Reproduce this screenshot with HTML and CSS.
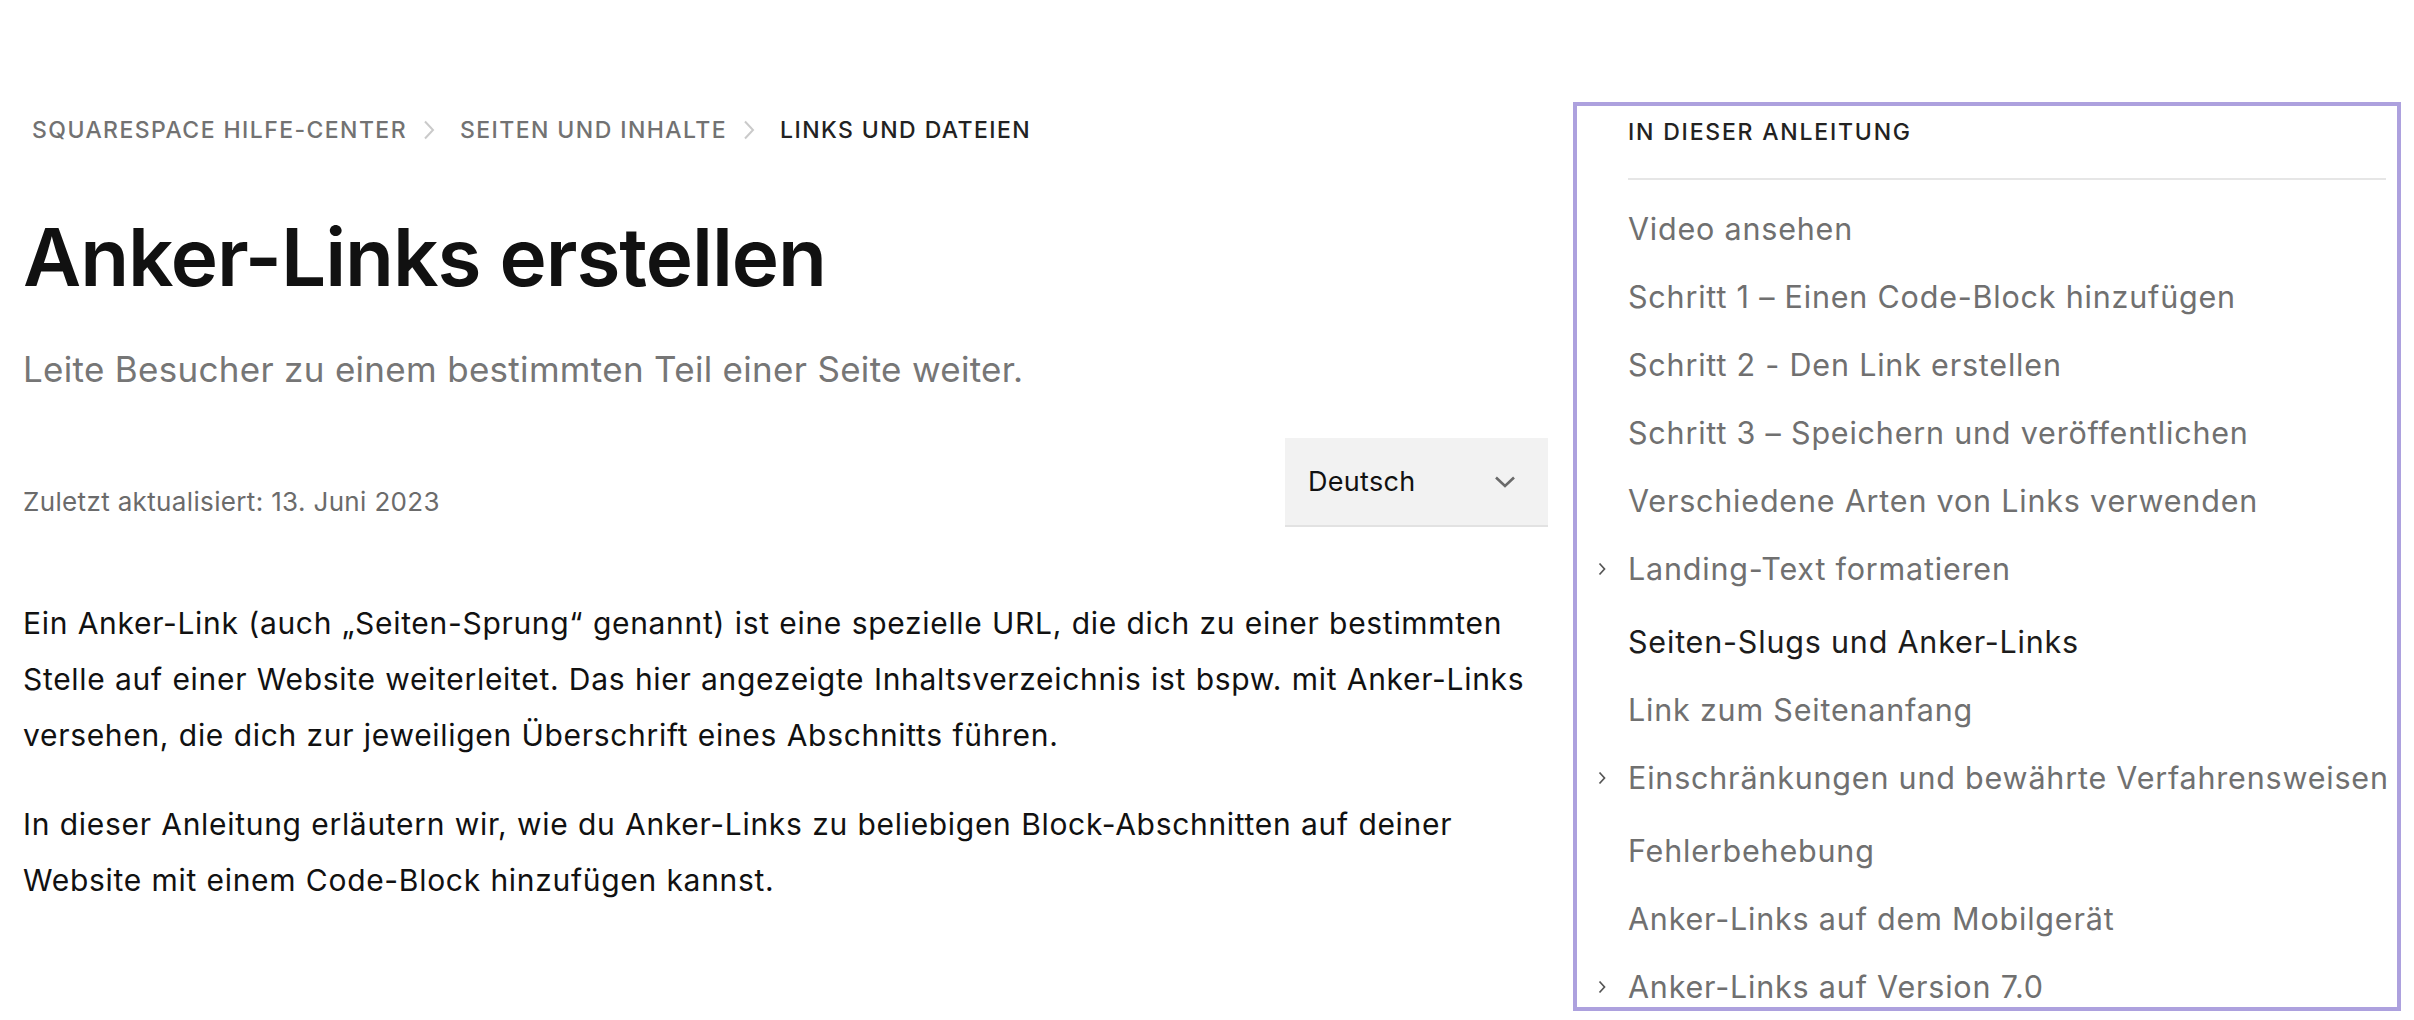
FILE: index.html
```html
<!DOCTYPE html>
<html lang="de">
<head>
<meta charset="utf-8">
<title>Anker-Links erstellen</title>
<link rel="stylesheet" href="styles.css">
</head>
<body>
<div class="page">
  <main class="main">
    <nav class="crumbs">
      <a class="crumb">Squarespace Hilfe-Center</a>
      <svg class="crumb-sep" viewBox="0 0 14 20" width="14" height="20"><path d="M3 1.5 L11 10 L3 18.5" fill="none" stroke="#cacaca" stroke-width="2"/></svg>
      <a class="crumb">Seiten und Inhalte</a>
      <svg class="crumb-sep" viewBox="0 0 14 20" width="14" height="20"><path d="M3 1.5 L11 10 L3 18.5" fill="none" stroke="#cacaca" stroke-width="2"/></svg>
      <a class="crumb crumb-current">Links und Dateien</a>
    </nav>
    <h1 class="title">Anker-Links erstellen</h1>
    <p class="subtitle">Leite Besucher zu einem bestimmten Teil einer Seite weiter.</p>
    <div class="meta">
      <span class="updated">Zuletzt aktualisiert: 13. Juni 2023</span>
      <div class="lang">
        <span class="lang-label">Deutsch</span>
        <svg class="lang-caret" viewBox="0 0 22 14" width="22" height="14"><path d="M2 2.5 L11 11 L20 2.5" fill="none" stroke="#6a6a6a" stroke-width="2.6"/></svg>
      </div>
    </div>
    <div class="body">
      <p>Ein Anker-Link (auch „Seiten-Sprung“ genannt) ist eine spezielle URL, die dich zu einer bestimmten Stelle auf einer Website weiterleitet. Das hier angezeigte Inhaltsverzeichnis ist bspw. mit Anker-Links versehen, die dich zur jeweiligen Überschrift eines Abschnitts führen.</p>
      <p>In dieser Anleitung erläutern wir, wie du Anker-Links zu beliebigen Block-Abschnitten auf deiner Website mit einem Code-Block hinzufügen kannst.</p>
    </div>
  </main>
  <aside class="toc">
    <div class="toc-heading">In dieser Anleitung</div>
    <div class="toc-rule"></div>
    <ul class="toc-list">
      <li class="toc-item">Video ansehen</li>
      <li class="toc-item">Schritt 1 – Einen Code-Block hinzufügen</li>
      <li class="toc-item">Schritt 2 - Den Link erstellen</li>
      <li class="toc-item">Schritt 3 – Speichern und veröffentlichen</li>
      <li class="toc-item">Verschiedene Arten von Links verwenden</li>
      <li class="toc-item toc-has-sub"><svg class="toc-chev" viewBox="0 0 8 14" width="8" height="14"><path d="M1.5 1.5 L6.5 7 L1.5 12.5" fill="none" stroke="#555" stroke-width="1.7"/></svg>Landing-Text formatieren</li>
      <li class="toc-item toc-active">Seiten-Slugs und Anker-Links</li>
      <li class="toc-item">Link zum Seitenanfang</li>
      <li class="toc-item toc-has-sub"><svg class="toc-chev" viewBox="0 0 8 14" width="8" height="14"><path d="M1.5 1.5 L6.5 7 L1.5 12.5" fill="none" stroke="#555" stroke-width="1.7"/></svg>Einschränkungen und bewährte Verfahrensweisen</li>
      <li class="toc-item">Fehlerbehebung</li>
      <li class="toc-item">Anker-Links auf dem Mobilgerät</li>
      <li class="toc-item toc-has-sub"><svg class="toc-chev" viewBox="0 0 8 14" width="8" height="14"><path d="M1.5 1.5 L6.5 7 L1.5 12.5" fill="none" stroke="#555" stroke-width="1.7"/></svg>Anker-Links auf Version 7.0</li>
    </ul>
  </aside>
</div>
</body>
</html>
```

FILE: styles.css
```css
* { box-sizing: border-box; }

html, body {
  margin: 0;
  padding: 0;
  background: #ffffff;
}

body {
  font-family: Inter, "Noto Sans", "Liberation Sans", sans-serif;
  color: #111111;
  overflow: hidden;
  height: 1020px;
}

.page {
  display: flex;
  align-items: flex-start;
  gap: 25px;
  padding-left: 23px;
}

.main {
  width: 1525px;
  flex: none;
  padding-top: 115px;
}

.crumbs {
  display: flex;
  align-items: center;
  height: 30px;
  padding-left: 9px;
}

.crumb {
  font-size: 23px;
  line-height: 30px;
  text-transform: uppercase;
  letter-spacing: 0.062em;
  color: #727272;
  font-weight: 500;
}

.crumb-current {
  color: #222222;
}

.crumb-sep {
  display: block;
  margin: 0 24px 0 15px;
}

.title {
  margin: 67px 0 0;
  font-size: 80px;
  line-height: 90px;
  font-weight: 600;
  letter-spacing: -0.013em;
  color: #111111;
}

.subtitle {
  margin: 42px 0 0;
  font-size: 35px;
  line-height: 50px;
  color: #767676;
  font-weight: 400;
  letter-spacing: 0.3px;
}

.meta {
  margin-top: 44px;
  display: flex;
  justify-content: space-between;
  align-items: flex-end;
}

.updated {
  font-size: 26px;
  line-height: 50px;
  color: #6b6b6b;
  letter-spacing: 0.35px;
}

.lang {
  width: 263px;
  height: 89px;
  background: #f2f2f2;
  border-bottom: 2px solid #e2e2e2;
  display: flex;
  align-items: center;
  justify-content: space-between;
  padding: 0 32px 0 23px;
}

.lang-label {
  font-size: 27px;
  color: #111111;
  letter-spacing: 0.3px;
}

.lang-caret {
  display: block;
}

.body {
  margin-top: 68px;
}

.body p {
  margin: 0 0 33px;
  font-size: 30px;
  line-height: 56px;
  color: #111111;
  letter-spacing: 0.023em;
  word-spacing: 0.5px;
}

.toc {
  width: 828px;
  height: 909px;
  flex: none;
  margin-top: 102px;
  border: 4px solid #ada1de;
  overflow: hidden;
  padding: 11px 11px 0 51px;
}

.toc-heading {
  font-size: 23px;
  line-height: 30px;
  text-transform: uppercase;
  letter-spacing: 0.078em;
  color: #222222;
  font-weight: 500;
}

.toc-rule {
  margin-top: 31px;
  height: 2px;
  background: #e6e6e6;
}

.toc-list {
  list-style: none;
  margin: 15px 0 0;
  padding: 0;
}

.toc-item {
  position: relative;
  font-size: 30.5px;
  line-height: 68px;
  color: #707070;
  white-space: nowrap;
  letter-spacing: 0.8px;
}

.toc-has-sub {
  padding-bottom: 5px;
}

.toc-active {
  color: #1c1c1c;
}

.toc-chev {
  position: absolute;
  left: -30px;
  top: 27px;
}
```
